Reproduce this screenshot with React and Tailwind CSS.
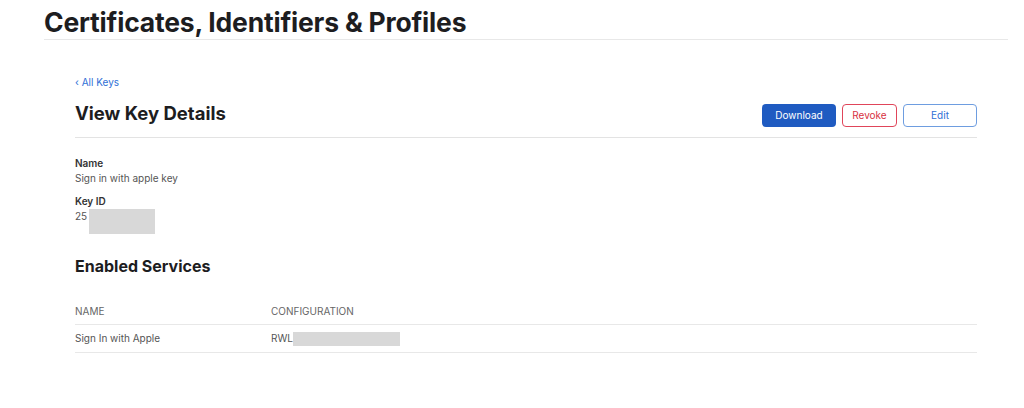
import React from 'react';

const Redacted = ({ className }) => <span className={`inline-block bg-[#d8d8d8] ${className}`}></span>;

const App = () => {
  return (
    <div className="w-[1024px] h-[408px] bg-white font-['Inter',sans-serif] text-[#1d1d1f] overflow-hidden">
      <div className="pl-[44px] pr-[16px] pt-[7px]">
        <h1 className="text-[26.5px] leading-[31px] font-bold tracking-[-0.2px] pb-[1px] border-b border-[#e8e8e8]">
          Certificates, Identifiers &amp; Profiles
        </h1>
      </div>

      <div className="ml-[75px] w-[902px] pt-[36px]">
        <a href="#" className="text-[10px] leading-[12px] text-[#2f6fd6] block">‹ All Keys</a>

        <div className="flex items-end justify-between mt-[14px] pb-[10px] border-b border-[#e3e3e3]">
          <h2 className="text-[18.5px] leading-[22px] font-bold mb-[3px]">View Key Details</h2>
          <div className="flex gap-[6px]">
            <button className="w-[74px] h-[23px] rounded-[4px] bg-[#1f5bc1] text-white text-[10px]">Download</button>
            <button className="w-[55px] h-[23px] rounded-[4px] border border-[#e0455a] text-[#d8313f] text-[10px]">Revoke</button>
            <button className="w-[74px] h-[23px] rounded-[4px] border border-[#6e9de0] text-[#2f6fd6] text-[10px]">Edit</button>
          </div>
        </div>

        <dl className="pt-[18px] text-[10px] leading-[14px]">
          <dt className="font-semibold text-[#333]">Name</dt>
          <dd className="text-[#555] mt-[1px]">Sign in with apple key</dd>
          <dt className="font-semibold text-[#333] mt-[9px]">Key ID</dt>
          <dd className="text-[#555] flex items-start">
            <span className="mt-[1px]">25</span>
            <Redacted className="w-[66px] h-[25px] mt-[1px] ml-[2px]" />
          </dd>
        </dl>

        <h3 className="text-[16px] leading-[20px] font-bold mt-[22px]">Enabled Services</h3>

        <table className="w-full mt-[28px] text-[10px] text-[#555]">
          <thead>
            <tr className="border-b border-[#e8e8e8]">
              <th className="text-left font-normal w-[196px] pb-[5px] text-[#666]">NAME</th>
              <th className="text-left font-normal pb-[5px] text-[#666]">CONFIGURATION</th>
            </tr>
          </thead>
          <tbody>
            <tr className="border-b border-[#e8e8e8]">
              <td className="py-[6px]">Sign In with Apple</td>
              <td className="py-[6px]">
                <span className="flex items-center">
                  RWL
                  <Redacted className="w-[107px] h-[14px]" />
                </span>
              </td>
            </tr>
          </tbody>
        </table>
      </div>
    </div>
  );
};

export default App;
